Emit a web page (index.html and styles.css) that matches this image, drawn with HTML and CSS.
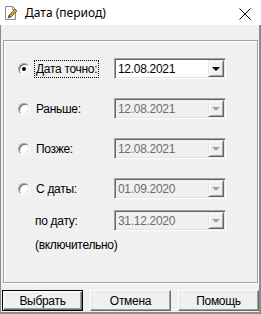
FILE: index.html
```html
<!DOCTYPE html>
<html lang="ru">
<head>
  <meta charset="UTF-8">
  <title>Дата (период)</title>
  <link rel="stylesheet" href="styles.css">
</head>
<body>
  <div class="window">
    <div class="titlebar">
      <svg class="app-icon" width="16" height="16" viewBox="0 0 16 16">
        <path d="M2.5 1.5h7l3 3v10h-10z" fill="#fff" stroke="#8a8a8a"/>
        <path d="M9.5 1.5v3h3" fill="none" stroke="#8a8a8a"/>
        <path d="M5 13l1-3 6-6 2 2-6 6z" fill="#c9a23a" stroke="#6b5a2a" stroke-width="0.8"/>
        <path d="M5 13l1-3 2 2z" fill="#555"/>
      </svg>
      <span class="title">Дата (период)</span>
      <svg class="close-icon" width="12" height="12" viewBox="0 0 12 12">
        <path d="M0.5 0.5l11 11M11.5 0.5l-11 11" stroke="#000" stroke-width="1"/>
      </svg>
    </div>

    <div class="content">
      <div class="group">
        <div class="row first">
          <span class="radio checked"></span>
          <span class="label"><span class="focus">Дата точно:</span></span>
          <div class="combo">
            <span class="value">12.08.2021</span>
            <span class="drop"><i class="arrow"></i></span>
          </div>
        </div>
        <div class="row">
          <span class="radio"></span>
          <span class="label">Раньше:</span>
          <div class="combo disabled">
            <span class="value">12.08.2021</span>
            <span class="drop"><i class="arrow"></i></span>
          </div>
        </div>
        <div class="row">
          <span class="radio"></span>
          <span class="label">Позже:</span>
          <div class="combo disabled">
            <span class="value">12.08.2021</span>
            <span class="drop"><i class="arrow"></i></span>
          </div>
        </div>
        <div class="row">
          <span class="radio"></span>
          <span class="label">С даты:</span>
          <div class="combo disabled">
            <span class="value">01.09.2020</span>
            <span class="drop"><i class="arrow"></i></span>
          </div>
        </div>
        <div class="row end-row">
          <span class="label plain">по дату:</span>
          <div class="combo disabled">
            <span class="value">31.12.2020</span>
            <span class="drop"><i class="arrow"></i></span>
          </div>
        </div>
        <div class="note">(включительно)</div>
      </div>

      <div class="buttons">
        <button class="btn default">Выбрать</button>
        <button class="btn">Отмена</button>
        <button class="btn">Помощь</button>
      </div>
    </div>
  </div>
</body>
</html>
```

FILE: styles.css
```css
body {
  margin: 0;
  background: #f0f0f0;
  font-family: 'Liberation Sans', Arial, sans-serif;
  font-size: 12px;
  color: #000;
}

.window {
  width: 261px;
  height: 314px;
  box-sizing: border-box;
  display: flex;
  flex-direction: column;
}

.titlebar {
  height: 25px;
  background: #fff;
  display: flex;
  align-items: center;
  flex-shrink: 0;
}

.app-icon {
  margin-left: 3px;
  margin-top: 1px;
}

.title {
  margin-left: 6px;
  font-family: 'Noto Sans', 'Open Sans', sans-serif;
  font-size: 12px;
  flex: 1;
}

.close-icon {
  margin-right: 10px;
  margin-top: 3px;
}

.content {
  flex: 1;
  border-left: 1px solid #8c8c8c;
  border-right: 2px solid #8c8c8c;
  border-bottom: 2px solid #8c8c8c;
  padding: 15px 0 0 1px;
}

/* group box */
.group {
  margin-left: 1px;
  width: 255px;
  height: 243px;
  box-sizing: border-box;
  border: 1px solid #a0a0a0;
  box-shadow: inset 1px 1px 0 #fff, 1px 1px 0 #fff;
  padding: 17px 0 0 14px;
}

.row {
  display: flex;
  align-items: center;
  height: 21px;
  margin-top: 19px;
}

.row.first {
  margin-top: 0;
}

.row.end-row {
  margin-top: 11px;
}

.radio {
  width: 12px;
  height: 12px;
  box-sizing: border-box;
  border-radius: 50%;
  background: #fff;
  border: 1px solid;
  border-color: #a0a0a0 #fff #fff #a0a0a0;
  box-shadow: inset 1px 1px 0 #696969, inset -1px -1px 0 #e3e3e3;
  position: relative;
  flex-shrink: 0;
}

.radio.checked::after {
  content: '';
  position: absolute;
  left: 3px;
  top: 3px;
  width: 4px;
  height: 4px;
  border-radius: 50%;
  background: #000;
}

.label {
  width: 78px;
  margin-left: 6px;
  letter-spacing: -0.3px;
}

.label.plain {
  width: 79px;
  margin-left: 17px;
}

.focus {
  outline: 1px dotted #000;
  outline-offset: 1px;
}

/* combo box */
.combo {
  width: 112px;
  height: 21px;
  box-sizing: border-box;
  display: flex;
  align-items: center;
  background: #fff;
  border: 1px solid;
  border-color: #a0a0a0 #fff #fff #a0a0a0;
  box-shadow: inset 1px 1px 0 #696969, inset -1px -1px 0 #e3e3e3;
  padding: 1px 1px 1px 3px;
}

.combo .value {
  flex: 1;
  letter-spacing: -0.3px;
}

.combo.disabled {
  background: #f0f0f0;
  color: #6d6d6d;
}

.drop {
  width: 16px;
  height: 17px;
  box-sizing: border-box;
  background: #f0f0f0;
  border: 1px solid;
  border-color: #e3e3e3 #696969 #696969 #e3e3e3;
  box-shadow: inset 1px 1px 0 #fff, inset -1px -1px 0 #a0a0a0;
  display: flex;
  align-items: center;
  justify-content: center;
}

.arrow {
  width: 0;
  height: 0;
  border-left: 4px solid transparent;
  border-right: 4px solid transparent;
  border-top: 4px solid #000;
  margin-top: 1px;
}

.disabled .arrow {
  border-top-color: #a0a0a0;
}

.note {
  margin: 7px 0 0 17px;
  letter-spacing: -0.3px;
}

/* bottom buttons */
.buttons {
  display: flex;
  gap: 7px;
  margin-top: 7px;
}

.btn {
  width: 81px;
  height: 21px;
  padding: 0;
  font-family: 'Liberation Sans', Arial, sans-serif;
  font-size: 12px;
  font-weight: normal;
  letter-spacing: -0.3px;
  color: #000;
  background: #f0f0f0;
  border: 1px solid;
  border-color: #fff #696969 #696969 #fff;
  box-shadow: inset -1px -1px 0 #a0a0a0, inset 1px 1px 0 #e3e3e3;
}

.btn.default {
  border: 1px solid #000;
  box-shadow: inset 1px 1px 0 #fff, inset -1px -1px 0 #696969, inset -2px -2px 0 #a0a0a0;
}
```
